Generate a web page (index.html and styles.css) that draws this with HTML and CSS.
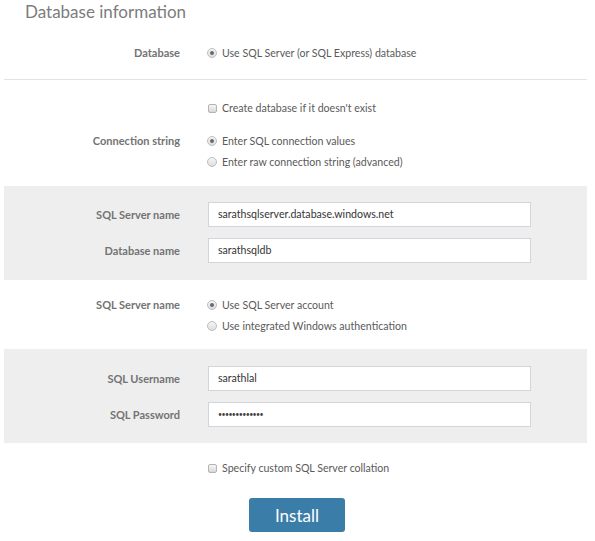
FILE: index.html
```html
<!DOCTYPE html>
<html>
<head>
<meta charset="utf-8">
<link rel="stylesheet" href="styles.css">
</head>
<body>
<div class="page">
  <h1 class="title">Database information</h1>

  <div class="row row-db">
    <div class="label">Database</div>
    <div class="controls">
      <label class="opt"><span class="radio on"></span>Use SQL Server (or SQL Express) database</label>
    </div>
  </div>

  <hr class="sep">

  <div class="row row-create">
    <div class="label"></div>
    <div class="controls">
      <label class="opt"><span class="check"></span>Create database if it doesn't exist</label>
    </div>
  </div>

  <div class="row row-conn">
    <div class="label">Connection string</div>
    <div class="controls">
      <label class="opt"><span class="radio on"></span>Enter SQL connection values</label>
      <label class="opt"><span class="radio"></span>Enter raw connection string (advanced)</label>
    </div>
  </div>

  <div class="panel panel-server">
    <div class="row field">
      <div class="label">SQL Server name</div>
      <div class="controls"><div class="input">sarathsqlserver.database.windows.net</div></div>
    </div>
    <div class="row field">
      <div class="label">Database name</div>
      <div class="controls"><div class="input">sarathsqldb</div></div>
    </div>
  </div>

  <div class="row row-auth">
    <div class="label">SQL Server name</div>
    <div class="controls">
      <label class="opt"><span class="radio on"></span>Use SQL Server account</label>
      <label class="opt"><span class="radio"></span>Use integrated Windows authentication</label>
    </div>
  </div>

  <div class="panel panel-login">
    <div class="row field">
      <div class="label">SQL Username</div>
      <div class="controls"><div class="input">sarathlal</div></div>
    </div>
    <div class="row field">
      <div class="label">SQL Password</div>
      <div class="controls"><div class="input pw">•••••••••••••</div></div>
    </div>
  </div>

  <div class="row row-collation">
    <div class="label"></div>
    <div class="controls">
      <label class="opt"><span class="check"></span>Specify custom SQL Server collation</label>
    </div>
  </div>

  <div class="actions">
    <button class="btn">Install</button>
  </div>
</div>
</body>
</html>
```

FILE: styles.css
```css
html, body {
  margin: 0;
  padding: 0;
  background: #ffffff;
}
body {
  font-family: Lato, "Open Sans", "Liberation Sans", sans-serif;
  color: #6a6a6a;
  width: 595px;
  height: 541px;
  overflow: hidden;
}
.page {
  padding: 0 8px 0 4px;
}
.title {
  margin: 0;
  padding: 1px 0 0 21px;
  height: 24px;
  font-size: 17px;
  font-weight: 400;
  color: #7c7c7c;
  line-height: 22px;
}
.row {
  display: grid;
  grid-template-columns: 176px 323px;
  column-gap: 28px;
  align-items: start;
}
.label {
  text-align: right;
  font-size: 11px;
  font-weight: 700;
  color: #737373;
  line-height: 20px;
}
.controls {
  display: flex;
  flex-direction: column;
  gap: 1px;
}
.opt {
  display: flex;
  align-items: center;
  gap: 5px;
  font-size: 10.6px;
  color: #5a5a5a;
  line-height: 20px;
  height: 20px;
}
.radio {
  box-sizing: border-box;
  width: 10px;
  height: 10px;
  margin-left: -1px;
  border-radius: 50%;
  border: 1px solid #bdbdbd;
  background: linear-gradient(#f6f6f6, #dedede);
  position: relative;
  flex: none;
}
.radio.on::after {
  content: "";
  position: absolute;
  left: 2px;
  top: 2px;
  width: 4px;
  height: 4px;
  border-radius: 50%;
  background: #6a6a6a;
}
.check {
  box-sizing: border-box;
  width: 9px;
  height: 9px;
  border-radius: 2px;
  border: 1px solid #b4b4b4;
  background: linear-gradient(#f6f6f6, #d8d8d8);
  flex: none;
}
.row-db {
  margin-top: 18px;
}
.sep {
  margin: 16px 0 0 0;
  border: 0;
  border-top: 1px solid #e3e3e3;
  height: 0;
}
.row-create {
  margin-top: 18px;
}
.row-conn {
  margin-top: 13px;
}
.panel {
  background: #eeeeee;
  display: flex;
  flex-direction: column;
  gap: 11px;
  padding: 16px 0 17px 0;
}
.panel-server {
  margin-top: 14px;
}
.row.field {
  align-items: center;
}
.input {
  box-sizing: border-box;
  height: 25px;
  width: 323px;
  background: #fff;
  border: 1px solid #d2d5dc;
  padding: 0 9px;
  font-size: 10.6px;
  line-height: 23px;
  color: #333;
}
.input.pw {
  font-size: 7px;
  letter-spacing: -0.6px;
  color: #444;
}
.row-auth {
  margin-top: 15px;
}
.panel-login {
  margin-top: 13px;
  padding: 17px 0 16px 0;
}
.row-collation {
  margin-top: 15px;
}
.actions {
  display: flex;
  justify-content: flex-start;
  padding-left: 245px;
  margin-top: 20px;
}
.btn {
  width: 96px;
  height: 34px;
  border: 0;
  border-radius: 3px;
  background: #3a7da8;
  color: #ffffff;
  font-family: Lato, "Open Sans", "Liberation Sans", sans-serif;
  font-size: 17px;
  padding: 0;
}
```
